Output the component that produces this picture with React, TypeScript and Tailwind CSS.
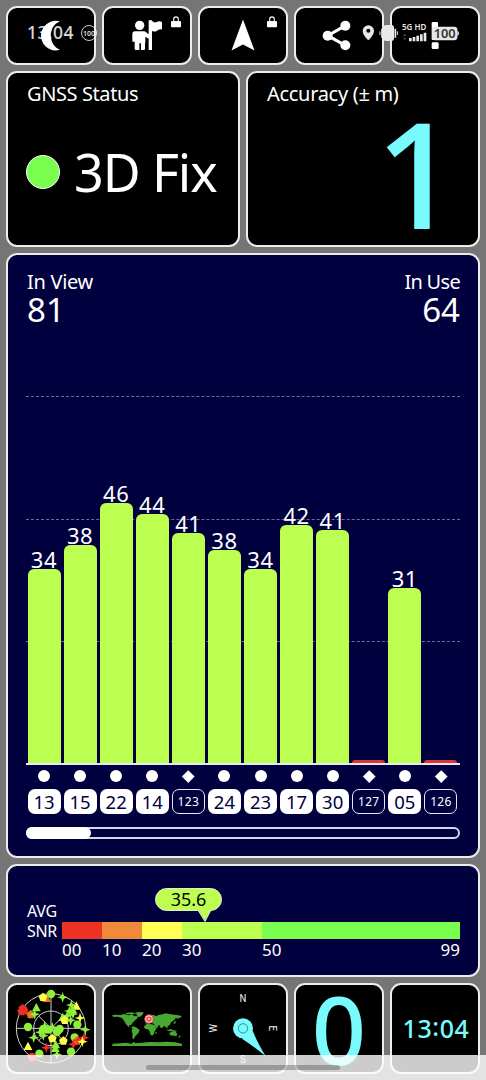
import type { ReactNode } from 'react';
import { clsx } from 'clsx';

type MarkerShape = 'circle' | 'star' | 'triangle' | 'pentagon';

interface Satellite {
  id: string;
  snr: number | null;
  height: number;
  shape: 'circle' | 'diamond';
}

interface Marker {
  x: number;
  y: number;
  shape: MarkerShape;
  color: string;
}

const SATELLITES: Satellite[] = [
  { id: '13', snr: 34, height: 194, shape: 'circle' },
  { id: '15', snr: 38, height: 218, shape: 'circle' },
  { id: '22', snr: 46, height: 260, shape: 'circle' },
  { id: '14', snr: 44, height: 249, shape: 'circle' },
  { id: '123', snr: 41, height: 230, shape: 'diamond' },
  { id: '24', snr: 38, height: 213, shape: 'circle' },
  { id: '23', snr: 34, height: 194, shape: 'circle' },
  { id: '17', snr: 42, height: 238, shape: 'circle' },
  { id: '30', snr: 41, height: 233, shape: 'circle' },
  { id: '127', snr: null, height: 3, shape: 'diamond' },
  { id: '05', snr: 31, height: 175, shape: 'circle' },
  { id: '126', snr: null, height: 3, shape: 'diamond' },
];

const SNR_SEGMENTS = [
  { label: '00', cls: 'w-10 bg-[#eb3223]' },
  { label: '10', cls: 'w-10 bg-[#f08a38]' },
  { label: '20', cls: 'w-10 bg-[#ffff54]' },
  { label: '30', cls: 'w-20 bg-[#bcff50]' },
  { label: '50', cls: 'flex-1 bg-[#79fd4e]' },
];

const GREEN = '#8ff03c';
const YELLOW = '#ffff45';
const RED = '#f02d1e';
const ORANGE = '#e8742a';

const MARKERS: Marker[] = [
  { x: 140, y: 70, shape: 'triangle', color: ORANGE },
  { x: 129, y: 66, shape: 'pentagon', color: YELLOW },
  { x: 153, y: 57, shape: 'circle', color: GREEN },
  { x: 188, y: 67, shape: 'star', color: GREEN },
  { x: 68, y: 100, shape: 'pentagon', color: RED },
  { x: 72, y: 106, shape: 'pentagon', color: RED },
  { x: 65, y: 109, shape: 'pentagon', color: RED },
  { x: 92, y: 118, shape: 'pentagon', color: ORANGE },
  { x: 104, y: 118, shape: 'star', color: GREEN },
  { x: 109, y: 98, shape: 'triangle', color: GREEN },
  { x: 229, y: 93, shape: 'triangle', color: YELLOW },
  { x: 214, y: 90, shape: 'star', color: GREEN },
  { x: 218, y: 103, shape: 'triangle', color: GREEN },
  { x: 208, y: 108, shape: 'star', color: GREEN },
  { x: 219, y: 117, shape: 'star', color: GREEN },
  { x: 202, y: 122, shape: 'star', color: GREEN },
  { x: 240, y: 129, shape: 'star', color: YELLOW },
  { x: 188, y: 127, shape: 'triangle', color: GREEN },
  { x: 194, y: 135, shape: 'pentagon', color: YELLOW },
  { x: 212, y: 136, shape: 'star', color: GREEN },
  { x: 232, y: 149, shape: 'circle', color: GREEN },
  { x: 256, y: 164, shape: 'star', color: GREEN },
  { x: 84, y: 156, shape: 'circle', color: GREEN },
  { x: 134, y: 153, shape: 'star', color: GREEN },
  { x: 129, y: 164, shape: 'circle', color: GREEN },
  { x: 145, y: 164, shape: 'circle', color: GREEN },
  { x: 157, y: 157, shape: 'star', color: GREEN },
  { x: 179, y: 162, shape: 'circle', color: GREEN },
  { x: 171, y: 171, shape: 'circle', color: GREEN },
  { x: 130, y: 182, shape: 'star', color: GREEN },
  { x: 121, y: 172, shape: 'star', color: GREEN },
  { x: 101, y: 188, shape: 'star', color: GREEN },
  { x: 157, y: 190, shape: 'pentagon', color: YELLOW },
  { x: 190, y: 197, shape: 'pentagon', color: YELLOW },
  { x: 224, y: 187, shape: 'circle', color: GREEN },
  { x: 252, y: 188, shape: 'star', color: RED },
  { x: 231, y: 197, shape: 'pentagon', color: ORANGE },
  { x: 220, y: 208, shape: 'star', color: RED },
  { x: 234, y: 196, shape: 'star', color: RED },
  { x: 247, y: 200, shape: 'star', color: YELLOW },
  { x: 139, y: 218, shape: 'star', color: RED },
  { x: 167, y: 209, shape: 'triangle', color: GREEN },
  { x: 166, y: 220, shape: 'triangle', color: GREEN },
  { x: 84, y: 214, shape: 'triangle', color: YELLOW },
  { x: 171, y: 239, shape: 'star', color: GREEN },
  { x: 213, y: 230, shape: 'circle', color: GREEN },
  { x: 118, y: 236, shape: 'circle', color: GREEN },
  { x: 96, y: 246, shape: 'circle', color: RED },
];

function Tile({ className, children }: { className?: string; children: ReactNode }) {
  return (
    <div className={clsx('rounded-[11px] border-2 border-[#ececec]', className)}>
      {children}
    </div>
  );
}

function LockIcon() {
  return (
    <svg className="absolute right-[9px] top-[8px]" width="10" height="12" viewBox="0 0 10 12">
      <path d="M2.7 6V3.2a2.3 2.3 0 0 1 4.6 0V6" fill="none" stroke="#fff" strokeWidth="1.1" />
      <rect x="0" y="5" width="10" height="6.2" rx="0.8" fill="#fff" />
    </svg>
  );
}

function MarkerGlyph({ x, y, shape, color }: Marker) {
  const transform = `translate(${x} ${y})`;
  if (shape === 'circle') return <circle cx={x} cy={y} r="12.5" fill={color} />;
  if (shape === 'triangle') return <path transform={transform} d="M0-14 13 11H-13Z" fill={color} />;
  if (shape === 'pentagon') return <path transform={transform} d="M0-13 13-3 8 12H-8L-13-3Z" fill={color} />;
  return <path transform={transform} d="M0-16 4-4 16 0 4 4 0 16-4 4-16 0-4-4Z" fill={color} />;
}

function SkyPlot() {
  return (
    <svg className="size-full" viewBox="24 30 258 261">
      <g fill="none" stroke="#cfcfcf" strokeWidth="3">
        <circle cx="153" cy="160" r="104" />
        <circle cx="153" cy="160" r="52" />
        <path d="M49 160H257M153 56V264M116 123 190 197M190 123 116 197" />
      </g>
      {MARKERS.map((m, i) => (
        <MarkerGlyph key={i} {...m} />
      ))}
    </svg>
  );
}

function WorldMap() {
  return (
    <svg className="size-full" viewBox="312 30 258 261">
      <g fill="#48a832">
        {/* Americas */}
        <path d="M336 121 346 119 362 120 372 117 386 121 396 118 404 124 411 122 413 130 405 136 398 143 392 151 387 150 388 156 395 158 399 154 408 157 419 165 415 175 409 180 404 187 402 193 397 190 398 178 395 169 397 160 386 156 378 148 372 137 366 129 352 125 340 126Z" />
        <path d="M376 114 396 112 406 115 398 118 381 118Z" />
        <path d="M404 114 416 111 431 112 428 119 420 125 413 127 411 119Z" />
        {/* Africa */}
        <path d="M435 151 441 147 456 148 464 151 470 160 464 169 462 176 456 182 451 178 448 167 444 163 436 162 432 157Z" />
        <path d="M468 170 471 172 468 178 466 176Z" />
        {/* Europe and Asia */}
        <path d="M436 145 437 138 444 135 443 129 450 122 460 119 468 124 476 120 488 118 497 115 511 118 530 120 546 123 540 128 532 131 528 128 523 134 518 139 513 142 510 149 503 154 502 160 497 157 493 152 486 159 483 160 478 151 473 149 476 154 469 159 464 150 459 145 450 144 445 146Z" />
        <path d="M433 131 438 129 440 136 434 137Z" />
        <path d="M522 140 526 137 527 145 521 147Z" />
        {/* Oceania */}
        <path d="M497 161 505 165 512 162 520 166 530 167 529 170 518 169 505 168Z" />
        <path d="M508 174 515 170 521 168 527 170 532 177 529 184 522 182 510 181Z" />
        <path d="M538 181 543 184 535 190Z" />
        {/* Antarctica */}
        <path d="M338 206 360 205 378 203 395 206 402 200 405 205 425 203 450 201 475 202 500 200 525 202 546 206V213H336Z" />
      </g>
      <circle cx="447" cy="132" r="14" fill="#e23b4d" />
      <circle cx="447" cy="132" r="9.5" fill="none" stroke="#ffc6cb" strokeWidth="3.5" />
      <circle cx="447" cy="132" r="4" fill="#ffc6cb" />
    </svg>
  );
}

function Compass() {
  return (
    <svg className="size-full" viewBox="15 30 258 261">
      <g fill="#f2f2f2" fontSize="34" fontFamily="Roboto, sans-serif" fontWeight="400" textAnchor="middle">
        <text transform="translate(144 82) scale(.85 1)">N</text>
        <text transform="translate(144 264) scale(.8 1)">S</text>
        <text transform="translate(66 160) rotate(-90) scale(.85 1)">W</text>
        <text transform="translate(222 160) rotate(90) scale(.85 1)">E</text>
      </g>
      <path d="M212 244 Q176 214 141 191L173 167Q186 200 212 244Z" fill="#78fbfd" />
      <circle cx="144" cy="160" r="30" fill="#78fbfd" />
      <circle cx="144" cy="160" r="14" fill="none" stroke="#1f7d86" strokeWidth="2.5" />
    </svg>
  );
}

function Toolbar() {
  return (
    <div className="grid h-[59px] shrink-0 grid-cols-5 gap-1.5">
      <Tile className="bg-black">
        <svg className="size-full" viewBox="8 8 86 55">
          <path d="M60 21.5C53 18.5 41 24.500 41 35.500 41 46.500 52 53 60 49.500 48.500 46 47 26 60 21.500Z" fill="#fff" />
        </svg>
      </Tile>
      <Tile className="relative bg-black">
        <svg className="size-full" viewBox="312 24 258 165">
          <g fill="#fff">
            <circle cx="419" cy="76" r="14" />
            <path d="M405 94H432Q436 94 440 98L446 103V63Q446 60 451 60T456 63Q463 70 470 66 478 62 486 66V88Q478 87 471 92 463 97 456 92V150H446V116L436 110V128H435V146Q435 150 431 150H423V130H418V150H408Q404 150 404 146V125H397V103Q397 94 405 94Z" />
          </g>
        </svg>
        <LockIcon />
      </Tile>
      <Tile className="relative bg-black">
        <svg className="size-full" viewBox="200 8 86 55">
          <path d="M243 19.500 254.500 50.500 243 44.500 231.500 50.500Z" fill="#fff" />
        </svg>
        <LockIcon />
      </Tile>
      <Tile className="bg-black">
        <svg className="size-full" viewBox="159 24 258 165">
          <path d="M307 77 254 107 307 136" fill="none" stroke="#fff" strokeWidth="9" />
          <g fill="#fff">
            <circle cx="307" cy="77" r="15" />
            <circle cx="254" cy="107" r="15" />
            <circle cx="307" cy="136" r="15" />
          </g>
        </svg>
      </Tile>
      <Tile className="bg-black">
        <svg className="size-full" viewBox="447 24 258 165">
          <rect x="566" y="66" width="19" height="54" rx="3" fill="#fff" />
          <rect x="566" y="127" width="21" height="20" rx="4" fill="#fff" />
        </svg>
      </Tile>
    </div>
  );
}

// System status bar, drawn by the OS above the app
function StatusBar() {
  return (
    <div className="absolute inset-x-0 top-0 flex h-[66px] items-center pl-[27px] pr-[18px] text-white/85">
      <span className="w-[54px] text-[17.5px] font-medium leading-none tracking-[0.4px]">13:04</span>
      <span className="flex size-4 items-center justify-center rounded-full border border-white/80 text-[7px] font-semibold leading-none">
        100
      </span>
      <svg className="ml-auto h-[30px] w-[107px]" viewBox="354 54 321 90">
        <path d="M376 76a17 17 0 0 1 17 17c0 12-17 28-17 28s-17-16-17-28a17 17 0 0 1 17-17Z" fill="#e9e9e9" />
        <circle cx="376" cy="92" r="6" fill="#000" />
        <rect x="421" y="75" width="32" height="48" rx="8" fill="#e9e9e9" />
        <path d="M417 86V113M457 86V113" stroke="#e9e9e9" strokeWidth="5" />
        <path d="M411 94V105M463 94V105" stroke="#e9e9e9" strokeWidth="3" />
        <text x="477" y="90" fill="#e9e9e9" fontSize="24" fontWeight="600" textLength="73" lengthAdjust="spacingAndGlyphs">5G HD</text>
        <path d="M480 108 485 101 490 108ZM480 113 485 120 490 113Z" fill="#4b4b4b" />
        <path d="M502 124V114M513 124V111M524 124V107M535 124V103M546 124V98" stroke="#e9e9e9" strokeWidth="8" />
        <rect x="567" y="80" width="76" height="41" rx="9" fill="#e6e6e6" />
        <path d="M643 92q5 2 5 8t-5 8Z" fill="#e6e6e6" />
        <text x="605" y="113" fill="#333" fontSize="36" fontWeight="600" textAnchor="middle" textLength="66" lengthAdjust="spacingAndGlyphs">100</text>
      </svg>
    </div>
  );
}

function SatelliteChart() {
  return (
    <Tile className="flex h-[605px] shrink-0 flex-col bg-[#00003e] px-[18px] pt-[15px]">
      <div className="flex justify-between">
        <div className="pl-px">
          <div className="text-[20px] leading-6 tracking-[-0.3px]">In View</div>
          <div className="text-[33px] leading-8">81</div>
        </div>
        <div className="text-right">
          <div className="text-[20px] leading-6 tracking-[-0.7px]">In Use</div>
          <div className="text-[33px] leading-8">64</div>
        </div>
      </div>

      <div className="relative mt-[70px] h-[369px] shrink-0 border-b-2 border-[#e8e8f4]">
        <div className="absolute inset-x-0 top-0 h-[368px]">
          <div className="h-[122.5px] border-t border-dashed border-[#6c6c96]" />
          <div className="h-[122.5px] border-t border-dashed border-[#6c6c96]" />
          <div className="h-[122.5px] border-t border-dashed border-[#6c6c96]" />
        </div>
        <div className="relative grid h-full grid-cols-12 pr-px">
          {SATELLITES.map((s) => (
            <div key={s.id} className="flex flex-col items-center justify-end">
              {s.snr !== null && (
                <span className="text-[22px] leading-5 tracking-[0.6px]">{s.snr}</span>
              )}
              <div
                className={clsx('w-[33px] shrink-0', s.snr !== null ? 'rounded-t-[6px] bg-[#bcff50]' : 'rounded-t-[3px] bg-[#dc3535]')}
                style={{ height: s.height }}
              />
            </div>
          ))}
        </div>
      </div>

      <div className="mt-[5px] grid grid-cols-12 pr-px">
        {SATELLITES.map((s) => (
          <div key={s.id} className="flex flex-col items-center">
            <div className="flex h-3 items-center">
              {s.shape === 'circle' ? (
                <div className="size-3 rounded-full bg-white" />
              ) : (
                <div className="size-[8.5px] rotate-45 bg-white" />
              )}
            </div>
            <div
              className={clsx(
                'mt-[7px] flex h-[25px] w-[33px] items-center justify-center rounded-[7px]',
                s.shape === 'circle'
                  ? 'bg-white text-[18.5px] text-[#00003e]'
                  : 'border border-[#e8e8f4] text-[12px] tracking-[0.3px] text-white'
              )}
            >
              {s.id}
            </div>
          </div>
        ))}
      </div>

      <div className="mt-[13px] h-3 rounded-full border-2 border-[#d6d6ee]">
        <div className="-m-0.5 h-3 w-[65px] rounded-full bg-white" />
      </div>
    </Tile>
  );
}

function AverageSnr() {
  return (
    <Tile className="flex h-[113px] shrink-0 bg-[#00003e] px-[18px]">
      <div className="mt-[35px] w-[36px] pl-px text-[16px] leading-5 tracking-[-0.3px]">
        <div>AVG</div>
        <div>SNR</div>
      </div>
      <div className="relative mt-[56px] flex-1">
        <div className="flex h-[17px]">
          {SNR_SEGMENTS.map((s) => (
            <div key={s.label} className={s.cls} />
          ))}
        </div>
        <div className="flex text-[17px] leading-[22px]">
          <span className="w-10">00</span>
          <span className="w-10">10</span>
          <span className="w-10">20</span>
          <span className="w-20">30</span>
          <span className="flex-1">50</span>
          <span>99</span>
        </div>
        <div className="absolute -top-[34px] left-[93px] h-[23px] w-[67px] rounded-full border border-[#e4e9dc] bg-[#bcff50] text-center text-[18px] leading-[21px] text-black">
          35.6
        </div>
        <svg className="absolute -top-3 left-[135px]" width="16" height="12" viewBox="0 0 16 12">
          <path d="M1 0 8 11 14 0Z" fill="#bcff50" />
          <path d="M1.500 1 8 11.500 13.500 1" fill="none" stroke="#e4e9dc" strokeWidth="1" />
        </svg>
      </div>
    </Tile>
  );
}

export default function App() {
  return (
    <div
      className="relative flex h-[1080px] w-[486px] flex-col gap-1.5 overflow-hidden bg-[#757575] p-1.5 text-white"
      style={{ fontFamily: '"Noto Sans", sans-serif' }}
    >
      <Toolbar />

      <div className="grid h-[176px] shrink-0 grid-cols-2 gap-1.5">
        <Tile className="bg-black px-[18px] pt-[9px]">
          <div className="pl-px text-[20px] leading-6 tracking-[-0.4px]">GNSS Status</div>
          <div className="mt-[32px] flex h-[68px] items-center">
            <div className="size-[34px] rounded-full border border-white bg-[#79fd4e]" />
            <div className="ml-[14px] whitespace-nowrap text-[52px] leading-[68px] tracking-[-1.1px]">3D Fix</div>
          </div>
        </Tile>
        <Tile className="bg-black px-[18px] pt-[9px]">
          <div className="pl-px text-[20px] leading-6 tracking-[-0.3px]">Accuracy (± m)</div>
          <div className="mt-[7px] pr-px text-right text-[147px] font-medium leading-[118px] text-[#78fbfd]">1</div>
        </Tile>
      </div>

      <SatelliteChart />
      <AverageSnr />

      <div className="grid h-[91px] shrink-0 grid-cols-5 gap-1.5">
        <Tile className="bg-black">
          <SkyPlot />
        </Tile>
        <Tile className="bg-black">
          <WorldMap />
        </Tile>
        <Tile className="bg-black">
          <Compass />
        </Tile>
        <Tile className="flex items-center justify-center bg-black text-[95px] font-medium leading-[87px] text-[#78fbfd]">
          0
        </Tile>
        <Tile className="flex items-center justify-center bg-black pl-0.5 text-[25px] font-medium tracking-[0.6px] text-[#78fbfd]">
          <span>13</span>
          <span className="mb-1">:</span>
          <span>04</span>
        </Tile>
      </div>

      <StatusBar />

      {/* Gesture navigation area */}
      <div className="absolute inset-x-0 bottom-0 flex h-[25px] items-center justify-center bg-white/80">
        <div className="h-[5px] w-[194px] rounded-full bg-black/25" />
      </div>
    </div>
  );
}
